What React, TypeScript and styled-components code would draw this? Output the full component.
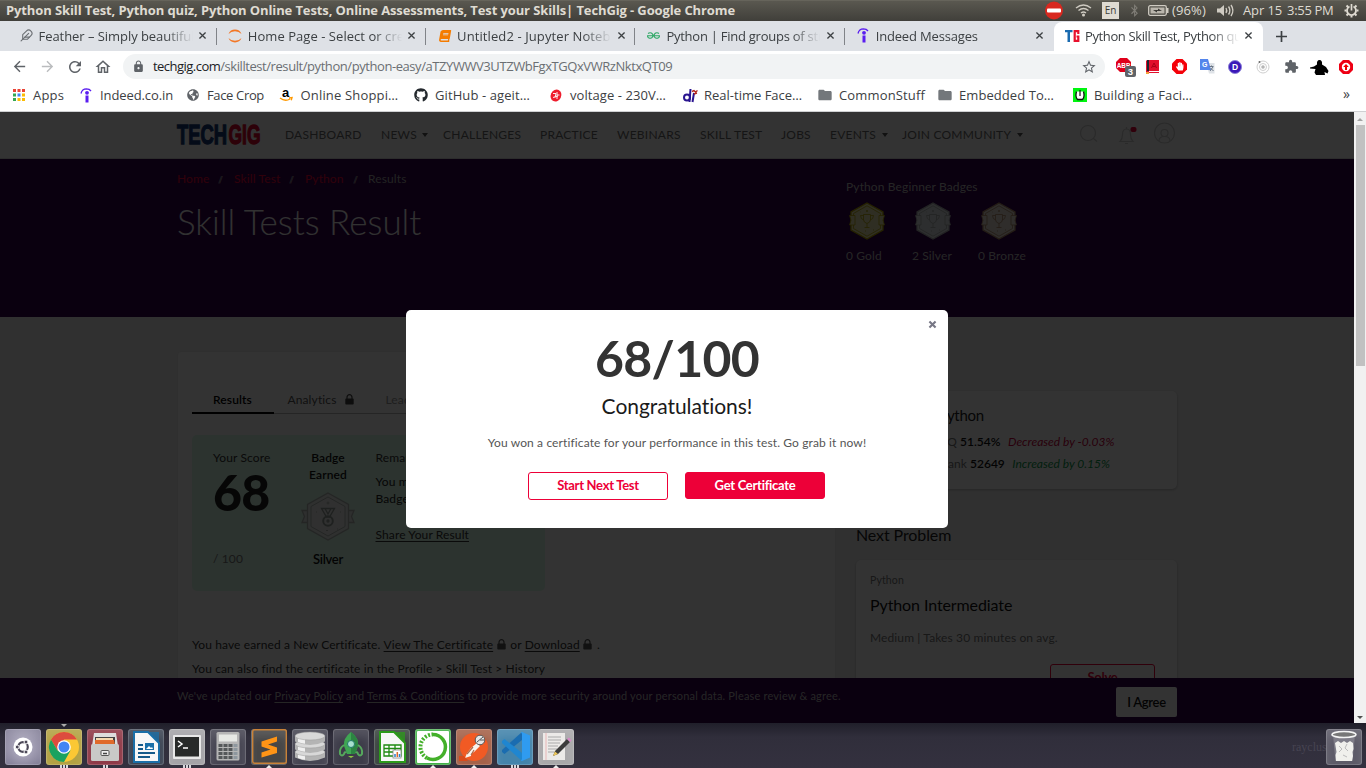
import React from "react";
import styled, { createGlobalStyle } from "styled-components";
import { FiFeather } from "react-icons/fi";
import { FaGithub, FaBook, FaGlobeAmericas, FaBluetoothB, FaHandPaper } from "react-icons/fa";
import { SiGeeksforgeeks, SiIndeed } from "react-icons/si";
import { MdExtension, MdFolder, MdLock, MdOutlineHome, MdStarOutline, MdArrowBack, MdArrowForward, MdRefresh, MdArrowUpward } from "react-icons/md";

const uiFont = `"Open Sans", "Noto Sans", sans-serif`;
const pageFont = `Lato, sans-serif`;
const red = "#ed0038";
const purple = "#32004b";

const GlobalStyle = createGlobalStyle`
  * { box-sizing: border-box; }
  body { margin: 0; width: 1366px; height: 768px; overflow: hidden; font: 400 12px/16px ${pageFont}; font-variant-ligatures: none; }
  svg { display: block; flex: none; overflow: visible; }
`;

const Desktop = styled.div`
  width: 1366px;
  height: 768px;
  display: flex;
  flex-direction: column;
  overflow: hidden;
`;

/* ---------- system top bar ---------- */
const TopBar = styled.header`
  height: 21px;
  flex: none;
  display: flex;
  align-items: center;
  justify-content: space-between;
  background: linear-gradient(#5a5850, #403f3a);
  border-top: 1px solid #66645b;
  padding-bottom: 2px;
  color: #dfdbd2;
  font: 400 13px/20px ${uiFont};
  white-space: nowrap;
`;
const WindowTitle = styled.div`
  padding-left: 6px;
  font-weight: 700;
  letter-spacing: -0.113px;
`;
const Indicators = styled.div`
  display: flex;
  align-items: center;
  width: 328px;
`;
const Indicator = styled.div<{ $w: number; $ls?: number }>`
  width: ${(p) => p.$w}px;
  flex: none;
  letter-spacing: ${(p) => p.$ls ?? 0}px;
`;
const Lang = styled.div`
  width: 17px;
  height: 17px;
  background: #dfdbd2;
  color: #3c3b37;
  font: 400 10px/17px ${uiFont};
  text-align: center;
`;

/* ---------- browser tabs ---------- */
const TabStrip = styled.div`
  height: 30px;
  flex: none;
  display: flex;
  padding: 1px 0 0 7.5px;
  background: #dee1e6;
  font: 400 13px/18px ${uiFont};
  color: #3c4043;
`;
const BrowserTab = styled.div<{ $active?: boolean; $line?: boolean }>`
  position: relative;
  width: 209.3px;
  height: 29px;
  flex: none;
  display: flex;
  align-items: center;
  padding: 0 0 2px 11px;
  border-radius: 8px 8px 0 0;
  background: ${(p) => (p.$active ? "#fff" : "transparent")};
  &::after {
    content: "";
    display: ${(p) => (p.$line ? "block" : "none")};
    position: absolute;
    right: 0;
    top: 6px;
    width: 1px;
    height: 17px;
    background: #808388;
  }
`;
const TabIcon = styled.span`
  width: 15px;
  margin-right: 5px;
  display: flex;
  justify-content: center;
`;
const TabTitle = styled.span<{ $ls: number }>`
  width: 154px;
  overflow: hidden;
  white-space: nowrap;
  letter-spacing: ${(p) => p.$ls}px;
  mask-image: linear-gradient(90deg, #000 126px, transparent 154px);
`;
const TabClose = styled.span`
  width: 20px;
  display: flex;
  justify-content: center;
`;
const NewTab = styled.div`
  width: 36px;
  display: flex;
  align-items: center;
  justify-content: center;
`;

/* ---------- address bar ---------- */
const Toolbar = styled.div`
  height: 31px;
  flex: none;
  display: flex;
  align-items: center;
  background: #fff;
  padding: 0 5px;
  color: #5f6368;
`;
const ToolButton = styled.div<{ $w?: number; $faint?: boolean }>`
  width: ${(p) => p.$w ?? 28}px;
  flex: none;
  display: flex;
  justify-content: center;
  color: ${(p) => (p.$faint ? "#babcbe" : "#5f6368")};
`;
const Omnibox = styled.div`
  width: 982px;
  height: 25px;
  margin: 0 6px 0 6px;
  border-radius: 13px;
  background: #f1f3f4;
  display: flex;
  align-items: center;
  padding: 0 8px 0 9px;
  font: 400 13px/25px ${uiFont};
  letter-spacing: -0.432px;
`;
const UrlText = styled.div`
  flex: 1;
  padding-left: 8px;
  color: #6b6f73;
`;
const UrlHost = styled.span`
  color: #202124;
  letter-spacing: -0.53px;
`;

/* ---------- bookmarks ---------- */
const Bookmarks = styled.div`
  height: 30px;
  flex: none;
  display: flex;
  align-items: center;
  padding: 0 11px 3px;
  background: #fff;
  border-bottom: 1px solid #cfd0d2;
  color: #3c4043;
  font: 400 13px/18px ${uiFont};
  white-space: nowrap;
`;
const Bookmark = styled.div<{ $w: number; $ls: number }>`
  width: ${(p) => p.$w}px;
  flex: none;
  display: flex;
  align-items: center;
  gap: 6px;
  letter-spacing: ${(p) => p.$ls}px;
`;
const BookmarkIcon = styled.span`
  width: 16px;
  display: flex;
  justify-content: center;
`;
const More = styled.div`
  margin: -3px 5px 0 auto;
  font-size: 14px;
`;

/* ---------- viewport ---------- */
const Viewport = styled.div`
  height: 611px;
  flex: none;
  display: flex;
`;
const Page = styled.div`
  position: relative;
  width: 1354px;
  height: 611px;
  overflow: hidden;
  background: #f1f1f1;
  letter-spacing: 0.12px;
`;
const Scrollbar = styled.div`
  width: 12px;
  height: 611px;
  background: #f1f1f1;
  display: flex;
  flex-direction: column;
  align-items: center;
  padding: 6px 0 4px;
`;
const Thumb = styled.div`
  width: 9px;
  height: 241px;
  margin: 4px 0 auto;
  background: #c1c1c1;
`;
const Arrow = styled.i<{ $down?: boolean }>`
  border: 3px solid transparent;
  ${(p) => (p.$down ? "border-top-color:#505050;border-bottom:0;" : "border-bottom-color:#a3a3a3;border-top:0;")}
`;

const SiteHeader = styled.div`
  height: 47px;
  background: #fff;
  border-bottom: 1px solid #ddd;
  padding: 0 177px;
  display: flex;
  align-items: center;
  color: #6a6a6a;
  letter-spacing: 0.23px;
  white-space: nowrap;
`;
const NavItem = styled.div<{ $w: number }>`
  width: ${(p) => p.$w}px;
  flex: none;
  display: flex;
  align-items: center;
  gap: 5.5px;
  padding-bottom: 1px;
`;
const Caret = styled.i`
  border: 3.5px solid transparent;
  border-top: 4px solid #555;
  border-bottom: 0;
  margin-top: 1px;
`;

const Hero = styled.section`
  height: 158px;
  background: ${purple};
  padding: 0 177px;
  display: flex;
  white-space: nowrap;
`;
const HeroMain = styled.div`
  width: 669px;
  padding-top: 11.5px;
`;
const Crumbs = styled.div`
  display: flex;
  height: 16px;
  color: #aaa;
`;
const CrumbLink = styled.span<{ $w: number }>`
  width: ${(p) => p.$w}px;
  color: ${red};
`;
const CrumbSep = styled.span<{ $w: number }>`
  width: ${(p) => p.$w}px;
  letter-spacing: -1px;
  color: #aaa;
  font-size: 9px;
  line-height: 17px;
`;
const HeroTitle = styled.h1`
  margin: 12px 0 0;
  font: 300 35px/44px ${pageFont};
  letter-spacing: 0;
  color: #f4f4f4;
`;
const HeroSide = styled.div`
  padding-top: 19.5px;
  color: #bbb;
`;
const BadgeRow = styled.div`
  display: flex;
  margin-top: 8.5px;
`;
const BadgeCell = styled.div`
  width: 66px;
  svg { margin: 0 0 9px 2px; }
`;

const Content = styled.main`
  display: flex;
  align-items: flex-start;
  gap: 20px;
  padding: 34px 177px 0;
  white-space: nowrap;
`;
const ResultCard = styled.section`
  width: 659px;
  height: 500px;
  background: #fff;
  border: 1px solid #e8e8e8;
  border-radius: 4px 4px 0 0;
  padding: 39px 14px 0;
`;
const Tabs = styled.div`
  display: flex;
  height: 23px;
  box-shadow: inset 0 -1px #bbb;
`;
const Tab = styled.div<{ $w: number; $tone?: "active" | "muted" }>`
  width: ${(p) => p.$w}px;
  height: 23px;
  line-height: 17px;
  display: flex;
  gap: 9px;
  padding-left: ${(p) => (p.$tone === "active" ? 21 : 13.5)}px;
  font-weight: ${(p) => (p.$tone === "active" ? 600 : 400)};
  color: ${(p) => (p.$tone === "active" ? "#000" : p.$tone === "muted" ? "#999" : "#555")};
  border-bottom: ${(p) => (p.$tone === "active" ? "2px solid #000" : "0")};
  svg { margin-top: 3px; }
`;
const ScorePanel = styled.div`
  width: 353px;
  height: 156px;
  margin-top: 21px;
  border-radius: 5px;
  background: #dbfce8;
  display: flex;
  padding: 14px 0 0 21px;
  color: #333;
`;
const ScoreCol = styled.div`
  width: 88px;
  padding-top: 1px;
`;
const Score = styled.div`
  margin: 1px 0 34px;
  font: 900 50px/50px ${pageFont};
  letter-spacing: -0.8px;
  color: #222;
`;
const Muted = styled.div`
  color: #777;
`;
const BadgeCol = styled.div`
  width: 54px;
  display: flex;
  flex-direction: column;
  align-items: center;
  text-align: center;
  font-weight: 600;
  line-height: 17px;
  color: #111;
  svg { margin: 9px 0 10px; }
`;
const BadgeName = styled.div`
  font-size: 13px;
  letter-spacing: -0.3px;
`;
const RemarkCol = styled.div`
  padding-left: 20.5px;
  line-height: 17px;
  color: #333;
  p { margin: 7px 0 19px; color: #222; }
`;
const Underlined = styled.span`
  text-decoration: underline;
  text-underline-offset: 2px;
`;
const CertLine = styled.div<{ $mt: number }>`
  display: flex;
  align-items: center;
  height: 16px;
  margin-top: ${(p) => p.$mt}px;
  color: #333;
  white-space: pre;
  letter-spacing: 0.11px;
  svg { margin: 0 1.5px 0 3.5px; }
`;

const Aside = styled.aside`
  width: 321px;
  padding-top: 40px;
`;
const Card = styled.div<{ $h: number }>`
  height: ${(p) => p.$h}px;
  background: #fff;
  border-radius: 5px;
  box-shadow: 0 1px 3px rgba(0, 0, 0, 0.25);
  padding: 13.5px 14px 0;
`;
const StatTitle = styled.div`
  width: 114px;
  text-align: right;
  font-size: 15px;
  line-height: 20px;
  letter-spacing: -0.25px;
  color: #222;
`;
const StatRow = styled.div<{ $mt: number; $label: number }>`
  display: flex;
  height: 16px;
  margin-top: ${(p) => p.$mt}px;
  color: #777;
  & > span { width: ${(p) => p.$label}px; text-align: right; }
  & > b { margin: 0 7.5px 0 3px; color: #111; letter-spacing: 0; font-weight: 600; }
`;
const Trend = styled.em<{ $up?: boolean }>`
  letter-spacing: 0;
  color: ${(p) => (p.$up ? "#0a9a4b" : "#cc003c")};
`;
const AsideHeading = styled.h2`
  margin: 36px 0 14.5px;
  font: 400 16px/20px ${pageFont};
  letter-spacing: -0.1px;
  color: #222;
`;
const Topic = styled.div`
  font-size: 10.5px;
  line-height: 14px;
  color: #777;
`;
const ProblemTitle = styled.div`
  margin: 8px 0 14.5px;
  font-size: 16px;
  line-height: 20px;
  letter-spacing: -0.1px;
  color: #111;
`;
const Button = styled.button<{ $kind?: "solid" | "outline"; $w: number }>`
  width: ${(p) => p.$w}px;
  height: 28px;
  padding: 0 0 1px;
  border-radius: 3px;
  border: 1px solid ${red};
  background: ${(p) => (p.$kind === "solid" ? red : "#fff")};
  color: ${(p) => (p.$kind === "solid" ? "#fff" : red)};
  font: 700 13px/25px ${pageFont};
  letter-spacing: -0.28px;
  ${(p) => p.$kind === "solid" && "height: 27px; line-height: 24px;"}
`;
const SolveSlot = styled.div`
  display: flex;
  justify-content: flex-end;
  margin: 18px 8px 0 0;
`;

const CookieBar = styled.div`
  position: absolute;
  left: 0;
  right: 0;
  bottom: 0;
  height: 45px;
  padding: 9px 177px 0;
  background: ${purple};
  display: flex;
  justify-content: space-between;
  color: #bbb;
  font-size: 11px;
  line-height: 17px;
  letter-spacing: 0.175px;
`;
const Agree = styled.button`
  width: 61px;
  height: 30px;
  border: 0;
  padding: 0 0 1px;
  border-radius: 2px;
  background: #fff;
  color: #111;
  font: 600 13px/28px ${pageFont};
  letter-spacing: -0.3px;
`;
const Overlay = styled.div`
  position: absolute;
  inset: 0;
  background: rgba(0, 0, 0, 0.8);
  display: flex;
  justify-content: center;
  align-items: flex-start;
  padding-top: 198px;
`;
const Modal = styled.div`
  position: relative;
  width: 542px;
  height: 218px;
  border-radius: 5px;
  background: #fff;
  padding-top: 18px;
  text-align: center;
  color: #555;
`;
const Close = styled.span`
  position: absolute;
  right: 12px;
  top: 11px;
`;
const BigScore = styled.div`
  font: 700 50px/60px ${pageFont};
  letter-spacing: -0.7px;
  color: #333;
`;
const Congrats = styled.div`
  margin: 5px 0 16px;
  font-size: 21px;
  line-height: 26px;
  letter-spacing: -0.05px;
  color: #1a1a1a;
`;
const Actions = styled.div`
  display: flex;
  justify-content: center;
  gap: 17px;
  margin-top: 21px;
  padding-right: 1px;
`;

/* ---------- dock ---------- */
const Dock = styled.footer`
  height: 45px;
  flex: none;
  display: flex;
  gap: 5px;
  padding: 5.5px 4px 0 5px;
  background: linear-gradient(#201f2a, #302e3b 14px, #34313f);
`;
const Tile = styled.div<{ $bg: string }>`
  position: relative;
  width: 36px;
  height: 36px;
  flex: none;
  display: flex;
  align-items: center;
  justify-content: center;
  border-radius: 3px;
  background: ${(p) => p.$bg};
  box-shadow: inset 0 0 0 1px rgba(255, 255, 255, 0.16), inset 0 8px 9px rgba(255, 255, 255, 0.12);
`;
const Running = styled.span<{ $top?: boolean }>`
  position: absolute;
  left: 0;
  right: 0;
  ${(p) => (p.$top ? "top:-5px;" : "top:36px;")}
  display: flex;
  justify-content: center;
  gap: 1px;
`;
const Tick = styled.i`
  width: 2px;
  height: 4px;
  background: #d8d8dc;
`;
const Pip = styled.i<{ $down?: boolean }>`
  border: 3px solid transparent;
  ${(p) => (p.$down ? "border-top:3px solid #aaa;border-bottom:0;" : "border-bottom:3px solid #eee;border-top:0;")}
`;
const Watermark = styled.div`
  margin-left: auto;
  width: 29px;
  white-space: nowrap;
  font: 12px/37px "Liberation Serif", serif;
  color: #474452;
`;

/* ---------- drawings ---------- */
const Cross = ({ s = 8, c = "#3c4043", w = 1.5 }) => (
  <svg width={s} height={s} viewBox="0 0 8 8" stroke={c} strokeWidth={w}>
    <path d="M.5.5l7 7M7.5.5l-7 7" />
  </svg>
);
const Padlock = ({ c = "#555" }) => (
  <svg width="9" height="11" viewBox="0 0 9 11">
    <path d="M2 5V3.2a2.5 2.5 0 0 1 5 0V5" fill="none" stroke={c} strokeWidth="1.2" />
    <rect x=".3" y="4.600" width="8.400" height="6" rx=".8" fill={c} />
  </svg>
);
const Jupyter = () => (
  <svg width="14" height="14" viewBox="0 0 14 14" fill="#f37726">
    <path d="M.5 5A7 7 0 0 1 13.5 5 8.8 8.8 0 0 0 .5 5zM.5 9A7 7 0 0 0 13.5 9 8.8 8.8 0 0 1 .5 9z" />
  </svg>
);
const IndeedMark = () => (
  <svg width="12" height="15" viewBox="0 0 12 15">
    <path d="M1 5.500Q2 1 6.500.9 9.500.9 11 3" fill="none" stroke="#5a1df0" strokeWidth="1.300" />
    <circle cx="7" cy="4.800" r="1.900" fill="#5a1df0" />
    <path d="M5.500 7.500h3V14.500h-3z" fill="#5a1df0" />
  </svg>
);
const TgMark = () => (
  <svg width="15" height="14" viewBox="0 0 15 14">
    <path d="M0 1h7.500v2.300H5V13H2.500V3.300H0z" fill="#1a6bb0" />
    <path d="M13.300 5V2.100H9.700V11.900H13.300V7.500H11.500" fill="none" stroke="#e8112d" strokeWidth="2.200" />
  </svg>
);
const Medal = ({ tone, fill }: { tone: string; fill: string }) => (
  <svg width="38" height="36" viewBox="0 0 38 36" fill="none" stroke={tone} strokeWidth=".8">
    <path d="M19 0L35 9V27L19 36 3 27V9z" fill={fill} strokeWidth="1.300" />
    <path d="M19 2.800L32.500 10.500V25.500L19 33.200 5.500 25.500V10.500z" fill={fill} />
    <path d="M1.500 12.500h5.500v9.500H1.500l1.500-4.700zM36.500 12.500h-5.500v9.500h5.500l-1.500-4.700z" fill={fill} />
    <path d="M15.500 11.500h7v5q0 3-3.500 4-3.500-1-3.500-4zM15.500 12.500h-3q0 4 3.500 4.500M22.500 12.500h3q0 4-3.500 4.500M19 20.500v4M16.500 24.500h5" />
    <path d="M19 7v2M18 8h2M17 28h1M25 27h1M12 9h.5" />
  </svg>
);
const SilverMedal = () => (
  <svg width="54" height="49" viewBox="0 0 54 49" fill="none" stroke="#b3bab6" strokeWidth="1.300">
    <path d="M7 18.500H1l2.500 6-2.500 6h6M47 18.500h6l-2.500 6 2.500 6h-6" fill="#e4e8e6" />
    <path d="M27 1L47.500 12.500V36.500L27 48 6.500 36.500V12.500z" fill="#e9edeb" />
    <path d="M27 5L44 14.500V34.500L27 44 10 34.500V14.500z" fill="#eef1ef" strokeWidth="1" />
    <path d="M20.500 16.500h3.500l3 5.500 3-5.500h3.500L28.500 25h-3zM24 16.500h6" stroke="#989f9b" />
    <circle cx="27" cy="29" r="4.800" strokeWidth="2" stroke="#989f9b" />
    <circle cx="27" cy="29" r="1" stroke="#989f9b" />
    <path d="M27 9.500v3M25.500 11h3M25 38.500h2M36 37h1M15 20h1M39 20h1" strokeWidth="1" />
  </svg>
);
const SiteLogo = () => (
  <svg width="84" height="20" viewBox="0 0 84 20" fontFamily="Liberation Sans, sans-serif" fontWeight="700" fontSize="27" strokeWidth="1.300" letterSpacing="0">
    <text x="0" y="18.700" textLength="50" lengthAdjust="spacingAndGlyphs" fill="#173b7a" stroke="#173b7a">TECH</text>
    <text x="51.500" y="18.700" textLength="32" lengthAdjust="spacingAndGlyphs" fill="#e0062d" stroke="#e0062d">GIG</text>
  </svg>
);
const ChromeLogo = () => (
  <svg width="30" height="30" viewBox="-15 -15 30 30">
    <circle r="15" fill="#fbc834" />
    <path d="M-13-7.500A15 15 0 0 1 13-7.500H0L-6.500 3.500z" fill="#dd4b3e" />
    <path d="M-13-7.500A15 15 0 0 0 0 15L6.500 3.500-6.500 3.500z" fill="#1aa260" />
    <circle r="6.800" fill="#fff" />
    <circle r="5.500" fill="#4285f4" />
  </svg>
);
const Document = ({ c, children }: { c: string; children: React.ReactNode }) => (
  <svg width="27" height="32" viewBox="0 0 27 32">
    <path d="M1 1h14l11 11v19H1z" fill="#f7f7f7" stroke={c} strokeWidth="2" />
    <path d="M15 1h11v11z" fill={c} opacity=".75" />
    {children}
  </svg>
);
const Dash = ({ d, c, w = 2 }: { d: string; c: string; w?: number }) => <path d={d} stroke={c} strokeWidth={w} fill="none" />;

const extensions = [
  { w: 27, icon: (
    <svg width="20" height="20" viewBox="0 0 20 20">
      <path d="M5 1h7l4 4v6l-4 4H5L1 11V5z" fill="#e0001b" />
      <text x="8.500" y="10.500" fontSize="6.500" fontWeight="700" textAnchor="middle" fill="#fff" fontFamily="Liberation Sans, sans-serif">ABP</text>
      <rect x="10" y="9" width="11" height="11" rx="2" fill="#5f6368" />
      <text x="15.500" y="18" fontSize="9.500" fontWeight="700" textAnchor="middle" fill="#fff" fontFamily="Liberation Sans, sans-serif">3</text>
    </svg>) },
  { w: 28, icon: (
    <svg width="13" height="14" viewBox="0 0 13 14"><path d="M1 0h12v11H3v1h10v1H2L0 12V1z" fill="#e2102c" /><path d="M1 0h2v11H1z" fill="#1c2530" /><path d="M5.500 8L8 3l2.500 5M6.500 6.500h3" stroke="#a80018" fill="none" /><path d="M0 12h3v2H0z" fill="#f2a33a" /></svg>) },
  { w: 27, icon: (
    <svg width="15" height="15" viewBox="0 0 15 15"><path d="M4.500 0h6L15 4.500v6L10.500 15h-6L0 10.500v-6z" fill="#f40009" /><g transform="translate(3.500 3)"><FaHandPaper size={8.500} color="#fff" /></g></svg>) },
  { w: 28, icon: (
    <svg width="15" height="15" viewBox="0 0 15 15"><path d="M6 4h8.500v10.500H9z" fill="#dfe3e8" /><path d="M0 0h8l3 11H0z" fill="#5485ec" /><text x="2" y="8" fontSize="7" fontWeight="700" fill="#fff" fontFamily="Liberation Sans, sans-serif">G</text><path d="M9.500 7.500h4M11.500 6.500v1M13 8l-3 4M10.500 9l3 3" stroke="#6b7787" fill="none" /></svg>) },
  { w: 28, icon: (
    <svg width="14" height="14" viewBox="0 0 14 14"><circle cx="7" cy="7" r="6.500" fill="#3a17b8" stroke="#8d82d8" /><text x="7" y="10.200" fontSize="8.500" fontWeight="700" textAnchor="middle" fill="#fff" fontFamily="Liberation Sans, sans-serif">D</text></svg>) },
  { w: 28, icon: (
    <svg width="14" height="14" viewBox="0 0 14 14" fill="none" stroke="#cfcfcf"><circle cx="7" cy="7" r="6" /><circle cx="7" cy="7" r="3.500" /><circle cx="7" cy="7" r="1.500" fill="#aaa" /><circle cx="3.500" cy="2" r="1" fill="#666" stroke="none" /></svg>) },
  { w: 28, icon: <MdExtension size={15} color="#5f6368" /> },
  { w: 28, icon: (
    <svg width="19" height="16" viewBox="0 0 19 16" fill="#000"><path d="M0 8.500L4 7.500l3-2Q6.500 1 9.500 1T12 5.500l4 2.500 2.500 4-1 2.500-3-1.500.5 3H6l-1.500-2.500L5.500 10 0 9.500z" /></svg>) },
  { w: 26, icon: (
    <svg width="14" height="14" viewBox="0 0 14 14"><path d="M4 0h6l4 4v6l-4 4H4L0 10V4z" fill="#ee0014" /><circle cx="7" cy="7" r="4.200" fill="#fff" /><path d="M7 4l2.800 3H8v3H6V7H4.200z" fill="#e00" /></svg>) },
];

const tabs = [
  { title: "Feather – Simply beautiful open", ls: -0.05, icon: <FiFeather size={13} color="#6b6f73" /> },
  { title: "Home Page - Select or create", ls: 0.05, icon: <Jupyter /> },
  { title: "Untitled2 - Jupyter Notebook", ls: 0.1, icon: <FaBook size={12} color="#f57c00" style={{ transform: "skewX(-10deg)" }} /> },
  { title: "Python | Find groups of strictly", ls: -0.25, icon: <SiGeeksforgeeks size={13} color="#2fa866" /> },
  { title: "Indeed Messages", ls: -0.17, icon: <IndeedMark /> },
  { title: "Python Skill Test, Python quiz", ls: -0.38, icon: <TgMark /> },
];

const bookmarks = [
  { title: "Apps", w: 67, ls: 0.17, icon: (
    <svg width="12" height="12" viewBox="0 0 12 12">
      {["#ea4335", "#ea4335", "#ea4335", "#34a853", "#4285f4", "#fbbc04", "#34a853", "#fbbc04", "#fbbc04"].map((c, i) => (
        <rect key={i} x={(i % 3) * 4.5} y={Math.floor(i / 3) * 4.5} width="3" height="3" fill={c} />
      ))}
    </svg>) },
  { title: "Indeed.co.in", w: 107, ls: -0.1, icon: <IndeedMark /> },
  { title: "Face Crop", w: 93.5, ls: -0.35, icon: <FaGlobeAmericas size={12} color="#5f6368" /> },
  { title: "Online Shoppi…", w: 134.5, ls: 0.17, icon: (
    <svg width="13" height="14" viewBox="0 0 13 14"><text x="5.500" y="9" fontSize="13" fontWeight="700" textAnchor="middle" fontFamily="Liberation Sans, sans-serif" letterSpacing="0">a</text><path d="M0 10q5 4 10 1M9 10l3-.5-.8 2.800" stroke="#f90" strokeWidth="1.400" fill="none" /></svg>) },
  { title: "GitHub - ageit…", w: 135, ls: 0.1, icon: <FaGithub size={14} color="#24292e" /> },
  { title: "voltage - 230V…", w: 134, ls: 0.07, icon: (
    <svg width="12" height="13" viewBox="0 0 12 13"><ellipse cx="6" cy="6.500" rx="5.200" ry="6.200" fill="#ee1c2c" transform="rotate(25 6 6.500)" /><path d="M3 4.500h3l-1 4M7 3v7M3 8.500l5-1.500M7 6h2.500" stroke="#fff" strokeWidth=".9" fill="none" /></svg>) },
  { title: "Real-time Face…", w: 135, ls: 0, icon: (
    <svg width="15" height="13" viewBox="0 0 15 13"><circle cx="4" cy="8.500" r="3" fill="none" stroke="#2a1590" strokeWidth="2" /><path d="M7.500 0L6.500 13M11 4L9.500 13" stroke="#2a1590" strokeWidth="2" /><path d="M9 2.500l2-1 1.500 1.500 2-1.500M11 5l3-1" stroke="#b3261e" strokeWidth="1.400" fill="none" /></svg>) },
  { title: "CommonStuff", w: 120, ls: 0.15, icon: <MdFolder size={16} color="#73777b" /> },
  { title: "Embedded To…", w: 135, ls: 0.07, icon: <MdFolder size={16} color="#73777b" /> },
  { title: "Building a Faci…", w: 125, ls: 0.1, icon: (
    <svg width="14" height="14" viewBox="0 0 14 14"><rect width="14" height="14" fill="#00f510" /><path d="M3.500 3.500Q2 9 4.500 11.500h5Q12 9 10.500 3.500" fill="#fff" stroke="#111" strokeWidth="1.300" /><path d="M7 2v6" stroke="#111" strokeWidth="1.200" /></svg>) },
];

const nav = [
  { label: "DASHBOARD", w: 96 },
  { label: "NEWS", w: 62, caret: true },
  { label: "CHALLENGES", w: 97 },
  { label: "PRACTICE", w: 77 },
  { label: "WEBINARS", w: 83 },
  { label: "SKILL TEST", w: 81 },
  { label: "JOBS", w: 49 },
  { label: "EVENTS", w: 72, caret: true },
  { label: "JOIN COMMUNITY", w: 176, caret: true },
];

const dock: { bg: string; icon: React.ReactNode; run?: number; active?: boolean }[] = [
  { bg: "radial-gradient(#bdb9cc,#7b7790)", icon: (
    <svg width="20" height="20" viewBox="-10 -10 20 20"><circle r="9.500" fill="#fff" /><circle r="4.800" fill="none" stroke="#4c4858" strokeWidth="2.200" /><g fill="#4c4858" stroke="#fff"><circle cx="-5.800" r="2" /><circle cx="3" cy="-5" r="2" /><circle cx="3" cy="5" r="2" /></g></svg>) },
  { bg: "#b3a243", run: 3, active: true, icon: <ChromeLogo /> },
  { bg: "#8f3a48", run: 2, icon: (
    <svg width="28" height="30" viewBox="0 0 28 30"><path d="M3 1h22l2 13H1z" fill="#ddd" /><path d="M4 5h20v8H4z" fill="#444" /><path d="M5 6h17v2H5z" fill="#f5d9b0" /><path d="M4 8h19l1 5H4z" fill="#e06a2b" /><rect y="12" width="28" height="17" rx="1.500" fill="#c9c9c7" /><rect x="10" y="18.500" width="8" height="5" rx="1" fill="#eee" stroke="#555" /><path d="M12 21.500h4" stroke="#444" strokeWidth="1.500" /></svg>) },
  { bg: "#3d4554", icon: <Document c="#1a6fa8"><Dash d="M5 14h5M5 18h5M5 22h17M5 26h12" c="#155a8a" /><rect x="12" y="12" width="9" height="7" fill="#1a6fa8" /><path d="M13 18l3-3 2 2 1-1 1 2z" fill="#fff" /></Document> },
  { bg: "#a5a4a8", run: 3, icon: (
    <svg width="28" height="24" viewBox="0 0 28 24"><rect width="28" height="24" rx="1" fill="#e8e8e8" /><rect x="2" y="2" width="24" height="19.500" fill="#282a29" /><path d="M5 6l4 3-4 3M10 13h5" stroke="#fff" strokeWidth="1.500" fill="none" /></svg>) },
  { bg: "#474653", icon: (
    <svg width="24" height="29" viewBox="0 0 24 29"><rect x=".5" width="23" height="28.500" rx="1.500" fill="#b5b5b5" /><rect x="3" y="2.500" width="18" height="7" fill="#e6e8e4" />{[0, 1, 2, 3].flatMap((r) => [0, 1, 2, 3].map((c) => <rect key={`${r}${c}`} x={2.5 + c * 5} y={12 + r * 4} width="4" height="3" fill={c === 3 ? "#8e979e" : "#55585a"} />))}</svg>) },
  { bg: "#474646", run: 1, icon: (
    <svg width="35" height="35" viewBox="0 0 35 35"><rect x=".7" y=".7" width="33.600" height="33.600" rx="2" fill="none" stroke="#c98238" strokeWidth="1.400" /><path d="M9.500 12.500L25 7.500v5l-9 3 9 3v5.500l-15.500 4.500v-5l9-3-9-3z" fill="#ff9416" /></svg>) },
  { bg: "#474653", icon: (
    <svg width="30" height="30" viewBox="0 0 30 30">{[21, 13, 5].map((y) => <g key={y}><path d={`M0 ${y - 1}v5.500q15 7 30 0v-5.500z`} fill="#b4b4b4" /><path d={`M3 ${y}v5q4 1.500 7 1.800v-5z`} fill="#f0f0f0" /><ellipse cx="15" cy={y - 1} rx="15" ry="4" fill="#d8d8d8" stroke="#999" strokeWidth=".5" /></g>)}</svg>) },
  { bg: "#3d3c49", icon: (
    <svg width="26" height="32" viewBox="0 0 26 32"><path d="M13 1q8 6 7 14l-3 8H9l-3-8Q5 7 13 1z" fill="#3fa653" /><path d="M13 1q8 6 7 14l-3 8h-4z" fill="#2c8442" /><path d="M6 14q-5 3-4 9 2 3 4 0 1-3 2-1M20 14q5 3 4 9-2 3-4 0-1-3-2-1" stroke="#56a85d" strokeWidth="2" fill="none" /><circle cx="13" cy="13" r="3.500" fill="#a8e0cf" stroke="#1f7a6a" /><path d="M10 25h6l-3 2z" fill="#8cc63f" /></svg>) },
  { bg: "#3b4540", icon: <Document c="#2c9a1b"><path d="M5 14h17v11H5zM5 17.500h17M5 21h17M10 14v11M16 14v11" stroke="#1f8a12" strokeWidth="1.300" fill="#fff" /><rect x="14" y="19" width="8" height="8" fill="#fff" stroke="#888" strokeWidth=".8" /><path d="M16 26v-3M20.500 26v-3" stroke="#2b7fd0" strokeWidth="1.500" /><path d="M18.300 26v-5" stroke="#e06a2b" strokeWidth="1.500" /></Document> },
  { bg: "#43b049", run: 1, icon: (
    <svg width="34" height="34" viewBox="-17 -17 34 34"><rect x="-16" y="-16" width="32" height="32" rx="1" fill="#fff" /><path d="M0-12.500A12.500 12.500 0 1 1-6 11" fill="none" stroke="#43b02a" strokeWidth="3.500" /><path d="M-6 11A12.500 12.500 0 0 1 0-12.500" fill="none" stroke="#43b02a" strokeWidth="4" strokeDasharray="2 1.500" /></svg>) },
  { bg: "#a5624a", run: 1, icon: (
    <svg width="30" height="30" viewBox="-15 -15 30 30"><circle r="14" fill="#f15a24" /><path d="M-9 11q2-6 6-10l6-5 3 3-6 6q-3 1-3 4" fill="#f7f3ee" /><path d="M-7 7l6-7M-3 8l3-5" stroke="#b06a48" strokeWidth="1.200" /><circle cx="6" cy="-7" r="4.800" fill="#e5e5e5" stroke="#555" /><path d="M3-5l6-5M6-7h4" stroke="#555" /><path d="M-15 9h5l4 5h-9z" fill="#d94b1c" /></svg>) },
  { bg: "#4484ab", run: 3, icon: (
    <svg width="29" height="29" viewBox="0 0 29 29"><path d="M21 0L1 18l0 2 2.500 2L21 8z" fill="#1a6cb0" /><path d="M21 29L1 11V9L3.500 7 21 21z" fill="#1f86d0" /><path d="M20 0l1 0 8 3.500v22L21 29h-1l1-2V2z" fill="#2f9bf0" /></svg>) },
  { bg: "#a9a8aa", run: 1, icon: (
    <svg width="29" height="29" viewBox="0 0 29 29"><path d="M1 1h22v27H1z" fill="#eceae8" /><path d="M4 1v27" stroke="#e9a0a0" strokeWidth=".7" /><path d="M6 5h13M6 8h13M6 11h12M6 14h10M6 17h9M6 20h6" stroke="#aaa" /><path d="M11 24l2-5L25 7l3 3-12 12z" fill="#3c3c3c" /><path d="M25 7l2-1.500 2.500 3L28 10z" fill="#d88bc8" /><path d="M11 24l2-4.500 3 2.500z" fill="#f0c95a" /></svg>) },
];

export default function App() {
  return (
    <Desktop>
      <GlobalStyle />
      <TopBar>
        <WindowTitle>Python Skill Test, Python quiz, Python Online Tests, Online Assessments, Test your Skills| TechGig - Google Chrome</WindowTitle>
        <Indicators>
          <Indicator $w={36.5}>
            <svg width="19" height="19" viewBox="-2.500 0 19 19"><circle cx="13.500" cy="9.500" r="9" fill="#d8281f" /><rect x="6.500" y="7.500" width="14" height="4" rx="1" fill="#fff" /></svg>
          </Indicator>
          <Indicator $w={27.5}>
            <svg width="17" height="12" viewBox="0 0 17 12" fill="none" stroke="#cfcbc2" strokeWidth="1.400"><path d="M1 4Q8.500-2 16 4M3.500 6.500Q8.500 2.500 13.500 6.500M6 9Q8.500 7 11 9" /><circle cx="8.500" cy="11" r=".8" fill="#cfcbc2" /></svg>
          </Indicator>
          <Indicator $w={26}><Lang>En</Lang></Indicator>
          <Indicator $w={20}><FaBluetoothB size={13} color="#807e77" /></Indicator>
          <Indicator $w={24}>
            <svg width="21" height="11" viewBox="0 0 21 11"><rect x=".7" y=".7" width="17.600" height="9.600" rx="1.500" fill="none" stroke="#cfcbc2" strokeWidth="1.300" /><rect x="2.500" y="2.500" width="14" height="6" fill="#b9b5ac" /><rect x="18.500" y="3" width="2" height="5" fill="#cfcbc2" /><path d="M5 5h5V3.500L14 6H9v1.500z" fill="#3c3b37" /></svg>
          </Indicator>
          <Indicator $w={45} $ls={0.14}>(96%)</Indicator>
          <Indicator $w={26}>
            <svg width="17" height="13" viewBox="0 0 17 13" fill="none" stroke="#cfcbc2" strokeWidth="1.400"><path d="M0 4.500h3L7 1v11L3 8.500H0z" fill="#cfcbc2" stroke="none" /><path d="M9 4q1.500 2.500 0 5M11.500 2.500q2.800 4 0 8M14 1q3.800 5.500 0 11" /></svg>
          </Indicator>
          <Indicator $w={44} $ls={-0.12}>Apr 15</Indicator>
          <Indicator $w={57} $ls={-0.3}>3:55 PM</Indicator>
          <svg width="15" height="15" viewBox="-7.500 -7.500 15 15" fill="none" stroke="#dfdbd2"><path d="M2-4A4.500 4.500 0 1 1-2-4" strokeWidth="1.800" /><path d="M0-6.500V0" strokeWidth="1.700" />{[45, 90, 135, 180, 225, 270, 315].map((a) => <path key={a} d="M0-5v-2" strokeWidth="2" transform={`rotate(${a})`} />)}</svg>
        </Indicators>
      </TopBar>

      <TabStrip>
        {tabs.map((t, i) => (
          <BrowserTab key={t.title} $active={i === 5} $line={i < 4}>
            <TabIcon>{t.icon}</TabIcon>
            <TabTitle $ls={t.ls}>{t.title}</TabTitle>
            <TabClose><Cross s={7} /></TabClose>
          </BrowserTab>
        ))}
        <NewTab><svg width="11" height="11" viewBox="0 0 11 11" stroke="#3c4043" strokeWidth="1.700"><path d="M5.500 0v11M0 5.500h11" /></svg></NewTab>
      </TabStrip>

      <Toolbar>
        <ToolButton><MdArrowBack size={17} /></ToolButton>
        <ToolButton $faint><MdArrowForward size={17} /></ToolButton>
        <ToolButton><MdRefresh size={18} /></ToolButton>
        <ToolButton><MdOutlineHome size={18} /></ToolButton>
        <Omnibox>
          <MdLock size={13} color="#5f6368" />
          <UrlText><UrlHost>techgig.com</UrlHost>/skilltest/result/python/python-easy/aTZYWWV3UTZWbFgxTGQxVWRzNktxQT09</UrlText>
          <MdStarOutline size={16} color="#5f6368" />
        </Omnibox>
        {extensions.map((e, i) => <ToolButton key={i} $w={e.w}>{e.icon}</ToolButton>)}
      </Toolbar>

      <Bookmarks>
        {bookmarks.map((b) => (
          <Bookmark key={b.title} $w={b.w} $ls={b.ls}><BookmarkIcon>{b.icon}</BookmarkIcon>{b.title}</Bookmark>
        ))}
        <More>»</More>
      </Bookmarks>

      <Viewport>
        <Page>
          <SiteHeader>
            <NavItem $w={108}><SiteLogo /></NavItem>
            {nav.map((n) => <NavItem key={n.label} $w={n.w}>{n.label}{n.caret && <Caret />}</NavItem>)}
            <svg width="98" height="26" viewBox="0 0 98 26" fill="none" stroke="#cfcfcf" strokeWidth="1.200">
              <circle cx="10" cy="11" r="7.500" /><path d="M15.500 16.500l3.500 3" />
              <path d="M42 19.500q2.500-2.500 2.500-7Q44.500 7 48.500 7t4 5.500q0 4.500 2.500 7zM47 21.500h3M48.500 7V5" />
              <rect x="52.500" y="5" width="6" height="5" rx="2" fill={red} stroke="none" />
              <circle cx="86.500" cy="11" r="10" /><circle cx="86.500" cy="11" r="3.500" /><path d="M81 19q0-4.500 5.500-4.500T92 19" />
            </svg>
          </SiteHeader>

          <Hero>
            <HeroMain>
              <Crumbs>
                <CrumbLink $w={41}>Home</CrumbLink><CrumbSep $w={16}>//</CrumbSep>
                <CrumbLink $w={55}>Skill Test</CrumbLink><CrumbSep $w={16}>//</CrumbSep>
                <CrumbLink $w={48}>Python</CrumbLink><CrumbSep $w={15}>//</CrumbSep>
                <span>Results</span>
              </Crumbs>
              <HeroTitle>Skill Tests Result</HeroTitle>
            </HeroMain>
            <HeroSide>
              Python Beginner Badges
              <BadgeRow>
                <BadgeCell><Medal tone="#b8a800" fill="#e8e4b0" />0 Gold</BadgeCell>
                <BadgeCell><Medal tone="#a9adaf" fill="#e2e6e8" />2 Silver</BadgeCell>
                <BadgeCell><Medal tone="#b08a68" fill="#e8e0d8" />0 Bronze</BadgeCell>
              </BadgeRow>
            </HeroSide>
          </Hero>

          <Content>
            <ResultCard>
              <Tabs>
                <Tab $w={82} $tone="active">Results</Tab>
                <Tab $w={98}>Analytics<Padlock c="#444" /></Tab>
                <Tab $w={120} $tone="muted">Leaderboard</Tab>
              </Tabs>
              <ScorePanel>
                <ScoreCol>Your Score<Score>68</Score><Muted>/ 100</Muted></ScoreCol>
                <BadgeCol>Badge<br />Earned<SilverMedal /><BadgeName>Silver</BadgeName></BadgeCol>
                <RemarkCol>Remarks<p>You missed Gold<br />Badge</p><Underlined>Share Your Result</Underlined></RemarkCol>
              </ScorePanel>
              <CertLine $mt={45.5}>You have earned a New Certificate. <Underlined>View The Certificate</Underlined><Padlock /> or <Underlined>Download</Underlined><Padlock /> .</CertLine>
              <CertLine $mt={8}>{"You can also find the certificate in the Profile > Skill Test > History"}</CertLine>
            </ResultCard>
            <Aside>
              <Card $h={98}>
                <StatTitle>Python</StatTitle>
                <StatRow $mt={9} $label={87}><span>IQ</span><b>51.54%</b><Trend>Decreased by -0.03%</Trend></StatRow>
                <StatRow $mt={6} $label={97}><span>Rank</span><b>52649</b><Trend $up>Increased by 0.15%</Trend></StatRow>
              </Card>
              <AsideHeading>Next Problem</AsideHeading>
              <Card $h={180}>
                <Topic>Python</Topic>
                <ProblemTitle>Python Intermediate</ProblemTitle>
                <Muted>Medium | Takes 30 minutes on avg.</Muted>
                <SolveSlot><Button $w={105}>Solve</Button></SolveSlot>
              </Card>
            </Aside>
          </Content>

          <CookieBar>
            <div>We've updated our <Underlined>Privacy Policy</Underlined> and <Underlined>Terms &amp; Conditions</Underlined> to provide more security around your personal data. Please review &amp; agree.</div>
            <Agree>I Agree</Agree>
          </CookieBar>

          <Overlay>
            <Modal>
              <Close><Cross s={7} c="#777785" w={2.4} /></Close>
              <BigScore>68/100</BigScore>
              <Congrats>Congratulations!</Congrats>
              You won a certificate for your performance in this test. Go grab it now!
              <Actions><Button $w={140}>Start Next Test</Button><Button $w={140} $kind="solid">Get Certificate</Button></Actions>
            </Modal>
          </Overlay>
        </Page>
        <Scrollbar><Arrow /><Thumb /><Arrow $down /></Scrollbar>
      </Viewport>

      <Dock>
        {dock.map((d, i) => (
          <Tile key={i} $bg={d.bg}>
            {d.icon}
            {d.active && <Running $top><Pip $down /></Running>}
            {d.run && <Running>{d.run === 1 ? <Pip /> : Array.from({ length: d.run }, (_, k) => <Tick key={k} />)}</Running>}
          </Tile>
        ))}
        <Watermark>raycluster</Watermark>
        <Tile $bg="#5d5b68">
          <svg width="26" height="31" viewBox="0 0 26 31"><path d="M2 4l2.500 26h17L24 4z" fill="#8b8a94" opacity=".7" /><path d="M4 12l3-2 3 2 3-2 3 2 3-2 3 2 .5 6-1 3 .5 4-1 5H5l-.5-6 1-3z" fill="#f0f0ec" /><path d="M8 15l3 3-3 3M16 13l-2 4 3 3M12 24l4 2" stroke="#bbb" fill="none" /><ellipse cx="13" cy="3.500" rx="12" ry="3" fill="#777" stroke="#f4f4f4" strokeWidth="1.600" /></svg>
        </Tile>
      </Dock>
    </Desktop>
  );
}
